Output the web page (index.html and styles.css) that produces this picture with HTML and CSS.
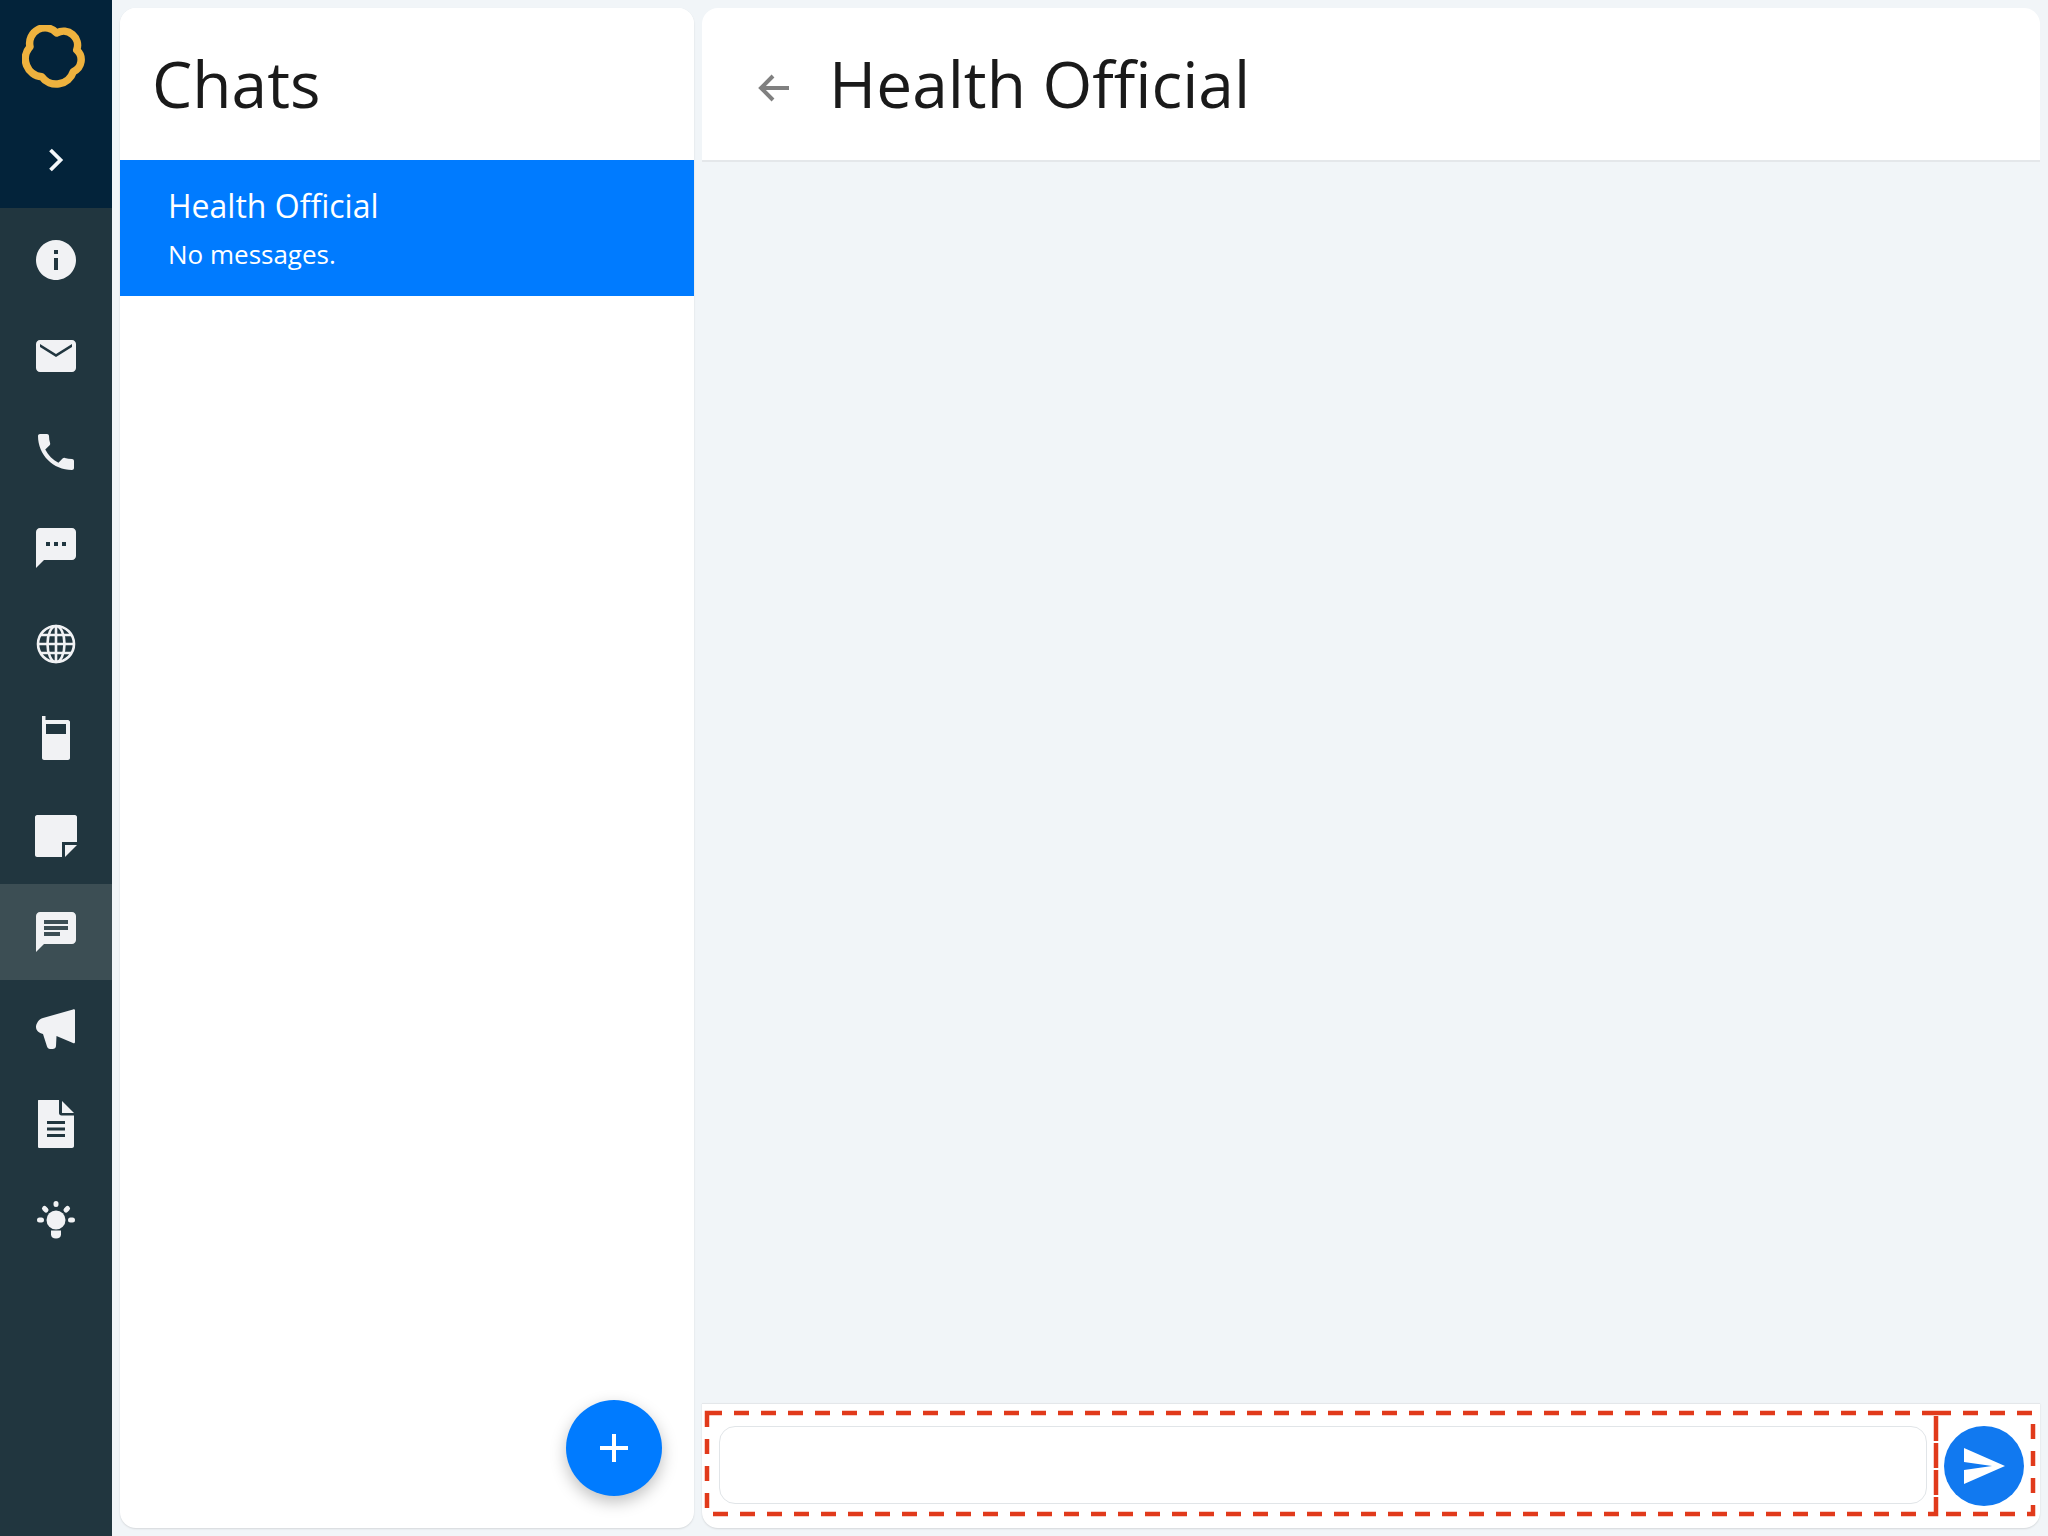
FILE: index.html
```html
<!DOCTYPE html>
<html lang="en">
<head>
<meta charset="utf-8">
<title>Chats</title>
<link rel="stylesheet" href="styles.css">
</head>
<body>
<div class="app">
  <nav class="sidebar">
    <div class="sidebar-top">
      <svg class="logo" viewBox="0 0 64 64"><path d="M34.700 8A14 14 0 0 1 54.700 25A13 13 0 0 1 51.300 46.700A18 18 0 0 1 19.700 51.700A18 18 0 0 1 8 21.700A15.500 15.500 0 0 1 34.700 8Z" fill="none" stroke="#eeb23e" stroke-width="7.500" stroke-linejoin="round"/></svg>
      <svg class="chevron" viewBox="0 0 16 24"><path d="M2.500 2l10 10-10 10" fill="none" stroke="#f4f8fa" stroke-width="3.800"/></svg>
    </div>
    <div class="nav-list">
      <div class="nav-item"><svg class="icon" viewBox="0 0 24 24"><path d="M12 2C6.480 2 2 6.480 2 12s4.480 10 10 10 10-4.480 10-10S17.520 2 12 2zm1 15h-2v-6h2v6zm0-8h-2V7h2v2z"/></svg></div>
      <div class="nav-item"><svg class="icon" viewBox="0 0 24 24"><path d="M20 4H4c-1.100 0-1.990.9-1.990 2L2 18c0 1.100.9 2 2 2h16c1.100 0 2-.9 2-2V6c0-1.100-.9-2-2-2zm0 3.500l-8 5-8-5V6l8 5 8-5v1.500z"/></svg></div>
      <div class="nav-item"><svg class="icon" viewBox="0 0 24 24"><path d="M6.620 10.790c1.440 2.830 3.760 5.140 6.590 6.590l2.200-2.200c.27-.27.67-.36 1.020-.24 1.120.37 2.330.57 3.570.57.55 0 1 .45 1 1V20c0 .55-.45 1-1 1-9.390 0-17-7.610-17-17 0-.55.45-1 1-1h3.500c.55 0 1 .45 1 1 0 1.250.2 2.450.57 3.570.11.35.03.74-.25 1.020l-2.200 2.200z"/></svg></div>
      <div class="nav-item"><svg class="icon" viewBox="0 0 24 24"><path d="M20 2H4c-1.100 0-1.990.9-1.990 2L2 22l4-4h14c1.100 0 2-.9 2-2V4c0-1.100-.9-2-2-2zM9 11H7V9h2v2zm4 0h-2V9h2v2zm4 0h-2V9h2v2z"/></svg></div>
      <div class="nav-item"><svg class="icon" viewBox="0 0 48 48"><g class="globe"><circle cx="24" cy="24" r="18"/><ellipse cx="24" cy="24" rx="8.500" ry="18"/><path d="M24 6v36M6 24h36M8.500 15h31M8.500 33h31"/></g></svg></div>
      <div class="nav-item"><svg class="icon" viewBox="0 0 48 48"><path fill-rule="evenodd" d="M10 0h3.500v4H36c1 0 2 1 2 2v36c0 1-1 2-2 2H12c-1 0-2-1-2-2zM14 8v10h20V8z"/></svg></div>
      <div class="nav-item"><svg class="icon" viewBox="0 0 48 48"><path d="M5 3h38c1 0 2 1 2 2v25H30v15H5c-1 0-2-1-2-2V5c0-1 1-2 2-2z"/><path d="M33 33h12L33 45z"/></svg></div>
      <div class="nav-item active"><svg class="icon" viewBox="0 0 24 24"><path d="M20 2H4c-1.100 0-1.990.9-1.990 2L2 22l4-4h14c1.100 0 2-.9 2-2V4c0-1.100-.9-2-2-2zM6 9h12v2H6V9zm8 5H6v-2h8v2zm4-6H6V6h12v2z"/></svg></div>
      <div class="nav-item"><svg class="icon" viewBox="0 0 48 48"><path d="M41 5.500c1-.6 2 0 2 1V38c0 1-1 1.600-2 1L24.500 32l-.5 10c-.1 2-1.500 3-3.500 3H18c-1.500 0-2.500-1-3-2.500L11 30C7 29 4 26.500 4 23s3-8 7-9z"/></svg></div>
      <div class="nav-item"><svg class="icon" viewBox="0 0 48 48"><path fill-rule="evenodd" d="M7 0h20v13c0 1.500 1 2.500 2.500 2.500H42V46c0 1-1 2-2 2H7c-1 0-1-1-1-2V1c0-1 0-1 1-1zM15 21v3h18v-3zM15 27.500v3h18v-3zM15 34v3h18v-3z"/><path d="M30 1l12 12H30z"/></svg></div>
      <div class="nav-item"><svg class="icon" viewBox="0 0 48 48"><g class="bulb"><path d="M24 7.500v1M12.500 12.500l1.500 1.500M35.500 12.500L34 14M7.500 24h2M38.500 24h2"/></g><circle cx="24" cy="24" r="9.500"/><path d="M19 34.500h10v4c0 2.500-2 4-5 4s-5-1.500-5-4z"/></svg></div>
    </div>
  </nav>
  <main class="content">
    <section class="panel chats">
      <header class="panel-header"><h1 class="title">Chats</h1></header>
      <div class="chat-row">
        <div class="chat-name">Health Official</div>
        <div class="chat-preview">No messages.</div>
      </div>
      <button class="fab" type="button" aria-label="New chat"><svg viewBox="0 0 28 28"><path d="M14 0v28M0 14h28" stroke="#fff" stroke-width="4"/></svg></button>
    </section>
    <section class="conversation">
      <header class="panel-header convo-header">
        <svg class="back" viewBox="0 0 32 32"><path d="M31 16H4M15 4L3 16l12 12" fill="none" stroke="#808080" stroke-width="4"/></svg>
        <h1 class="title">Health Official</h1>
      </header>
      <div class="messages"></div>
      <div class="composer">
        <div class="composer-input"></div>
        <button class="send" type="button" aria-label="Send"><svg viewBox="0 0 42 36"><path d="M0 0l41 18L0 36V22l28-4L0 14z" fill="#fff"/></svg></button>
        <svg class="annotation" viewBox="0 0 1338 125"><path d="M5 10H1234V111H5zM1234 10H1331V111H1234z" fill="none" stroke="#e13a1b" stroke-width="4.500" stroke-dasharray="15 12"/></svg>
      </div>
    </section>
  </main>
</div>
</body>
</html>
```
FILE: styles.css
```css
* { box-sizing: border-box; }
html, body { margin: 0; padding: 0; height: 100%; }
body { font-family: "Open Sans", "Noto Sans", sans-serif; background: #f1f5f8; color: #1a1a1a; }
.app { display: flex; height: 1536px; overflow: hidden; }

.sidebar { width: 112px; flex: none; background: #21363f; display: flex; flex-direction: column; }
.sidebar-top { height: 208px; background: #03233a; display: flex; flex-direction: column; align-items: center; }
.logo { width: 64px; height: 64px; margin: 25px 4px 0 0; }
.chevron { width: 16px; height: 24px; margin-top: 59px; }
.nav-list { margin-top: 4px; display: flex; flex-direction: column; }
.nav-item { height: 96px; flex: none; display: flex; align-items: center; justify-content: center; }
.nav-item.active { background: #3c4e54; }
.icon { width: 48px; height: 48px; fill: #f1f2f4; }
.globe { fill: none; stroke: #f1f2f4; stroke-width: 2.600; }
.bulb { fill: none; stroke: #f1f2f4; stroke-width: 5; stroke-linecap: round; }

.content { flex: 1; display: flex; gap: 8px; padding: 8px; min-width: 0; }
.panel { background: #fff; border-radius: 16px; box-shadow: 0 1px 2px rgba(0,0,0,.12); }
.chats { width: 574px; flex: none; position: relative; overflow: hidden; }
.panel-header { height: 152px; display: flex; align-items: center; padding-left: 32px; background: #fff; }
.title { margin: 0; font-size: 64px; font-weight: 400; line-height: 1; color: #1a1a1a; }
.chat-row { height: 136px; background: #007bff; color: #fff; padding: 24px 48px; }
.chat-name { font-size: 32px; line-height: 44px; }
.chat-preview { font-size: 26px; line-height: 36px; margin-top: 8px; }
.fab { position: absolute; right: 32px; bottom: 32px; width: 96px; height: 96px; border: 0; border-radius: 50%; background: #007bff; padding: 0; display: flex; align-items: center; justify-content: center; box-shadow: 0 6px 16px rgba(0,0,0,.25); }
.fab svg { width: 28px; height: 28px; }

.conversation { flex: 1; min-width: 0; display: flex; flex-direction: column; }
.convo-header { border-radius: 16px 16px 0 0; border-bottom: 2px solid #e4e7ea; height: 154px; padding-left: 56px; gap: 39px; }
.back { width: 32px; height: 32px; flex: none; margin-top: 8px; }
.messages { flex: 1; }
.composer { height: 125px; flex: none; position: relative; background: #fff; border-top: 1px solid #e4e7ea; border-radius: 0 0 16px 16px; box-shadow: 0 1px 2px rgba(0,0,0,.12); display: flex; align-items: center; padding: 0 16px 0 17px; gap: 17px; }
.composer-input { flex: 1; height: 78px; margin-bottom: 2px; background: #fff; border: 1px solid #e1e5e8; border-radius: 16px; }
.send { width: 80px; height: 80px; flex: none; border: 0; border-radius: 50%; background: #1179f0; padding: 0 0 0 2px; display: flex; align-items: center; justify-content: center; }
.send svg { width: 42px; height: 36px; }
.annotation { position: absolute; left: 0; top: -1px; width: 1338px; height: 125px; pointer-events: none; }
```
